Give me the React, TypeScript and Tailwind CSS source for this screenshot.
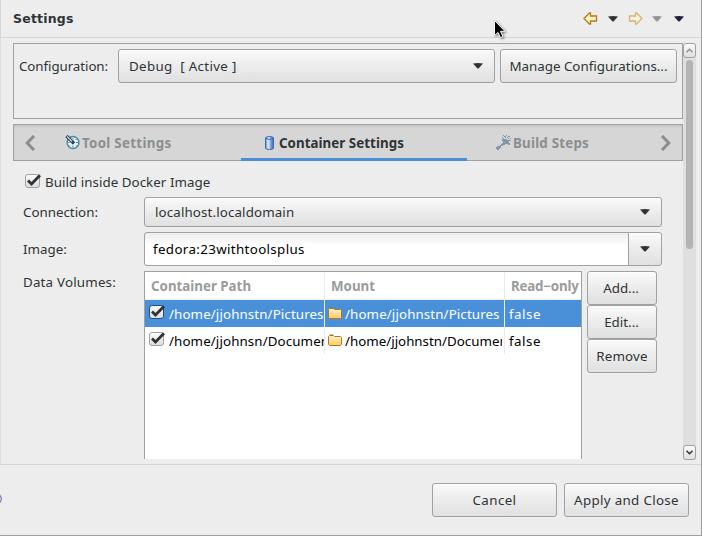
import React from "react";

const raised =
  "border border-[#a1a1a1] rounded-[3px] bg-linear-to-b from-[#fafafa] via-[#ececec] to-[#e0e0e0] shadow-[inset_0_1px_0_#ffffff]";

function Button({ className = "", children }: { className?: string; children: React.ReactNode }) {
  return (
    <button className={`${raised} flex shrink-0 items-center justify-center whitespace-pre ${className}`}>
      {children}
    </button>
  );
}

function Down({ color = "#2e3436", className = "" }: { color?: string; className?: string }) {
  return (
    <svg width="10" height="6" viewBox="0 0 10 6" className={`shrink-0 ${className}`}>
      <path d="M0 .5 Q5 -.3 10 .5 L6 5 Q5 6 4 5Z" fill={color} />
    </svg>
  );
}

function Check({ selected = false }: { selected?: boolean }) {
  return (
    <svg width="17" height="16" viewBox="0 0 17 16" className="shrink-0">
      <defs>
        <linearGradient id="checkFill" x1="0" y1="0" x2="0" y2="1">
          <stop offset="0" stopColor="#fcfcfc" />
          <stop offset="1" stopColor="#dcdcdc" />
        </linearGradient>
      </defs>
      <rect x="0.5" y="1.5" width="14" height="13" rx="2.5" fill="url(#checkFill)" stroke={selected ? "#1f4f86" : "#a1a1a1"} />
      <path d="M3 7.5 L6.5 11 L15 2.3" fill="none" stroke="#2e3436" strokeWidth="2.8" />
    </svg>
  );
}

function Folder() {
  return (
    <svg width="15" height="13" viewBox="0 0 15 13" className="shrink-0">
      <defs>
        <linearGradient id="folderFill" x1="0" y1="0" x2="0" y2="1">
          <stop offset="0" stopColor="#fff7cf" />
          <stop offset="1" stopColor="#fbc85a" />
        </linearGradient>
      </defs>
      <path d="M.5 10.5 V2.5 L1.5 1.5 H5.5 L6.5 2.5 H12.5 L13.5 3.5 V10.5 L12.5 11.5 H1.5Z" fill="url(#folderFill)" stroke="#b87528" />
      <path d="M2 1 H5" stroke="#a9651a" />
    </svg>
  );
}

function Arrow({ faded = false, flip = false, className = "" }: { faded?: boolean; flip?: boolean; className?: string }) {
  return (
    <svg width="15" height="13" viewBox="0 0 15 13" className={`shrink-0 ${flip ? "-scale-x-100" : ""} ${faded ? "opacity-50" : ""} ${className}`}>
      <path d="M1 6.5 L6.5 1 H7.5 V4 H13.5 V9 H7.5 V12 H6.5Z" fill="#fff6cc" stroke="#b87a0c" strokeWidth="1.3" />
    </svg>
  );
}

function Gauge() {
  return (
    <svg width="15" height="15" viewBox="0 0 15 15" className="shrink-0">
      <circle cx="8" cy="7.5" r="5.9" fill="#f1f6f8" stroke="#4a86ae" strokeWidth="1.5" />
      <path d="M8 3v1.5 M8 10.5v2 M3.3 7.5h1.5 M11 7.5h2 M10.5 5l1-1 M10.8 10.3l.9.9 M5.2 10.3l-.9.9" stroke="#4a86ae" />
      <path d="M1.5 1 L9 8.5" stroke="#1d3f63" strokeWidth="3.2" />
      <path d="M2 1.5 L7 6.5" stroke="#e3e6b8" strokeWidth="1.1" />
    </svg>
  );
}

function Cylinder() {
  return (
    <svg width="9" height="14" viewBox="0 0 9 14" className="shrink-0">
      <defs>
        <linearGradient id="cylinderFill">
          <stop offset="0" stopColor="#5b8bd0" />
          <stop offset=".35" stopColor="#e4efff" />
          <stop offset=".6" stopColor="#8db0e4" />
          <stop offset="1" stopColor="#3761ae" />
        </linearGradient>
      </defs>
      <path d="M.5 2 Q.5 .5 4.5 .5 T8.5 2 V12 Q8.5 13.5 4.5 13.5 T.5 12Z" fill="url(#cylinderFill)" stroke="#3f6cb4" />
      <path d="M1 2.5 Q4.5 4.5 8 2.5" fill="none" stroke="#3f6cb4" />
    </svg>
  );
}

function Wrench() {
  return (
    <svg width="16" height="15" viewBox="0 0 16 15" className="shrink-0" shapeRendering="crispEdges">
      <path d="M1 11h3v1h1v1h-1v1h-1v1h-2v-1h-1v-2h1z M4 10h1v-1h1v-1h1v-1h1v-3h1v1h1v1h1v1h2v1h1v2h-2v-1h-3v1h-2v1h-2v1h-1v1h-1z M6 4h2v1h1v3h-2v-2h-1z M9 4h2v1h2v2h-4z" fill="#8298ab" />
      <path d="M7 0h1v1h-1z M8 1h2v1h-2z M10 0h1v1h-1z M12 1h2v1h-2z M6 2h1v1h-1z M9 2h1v1h-1z M11 2h1v1h-1z M14 3h1v1h-1z M13 5h2v1h-2z M7 3h1v1h-1z M12 3h1v1h-1z" fill="#8298ab" />
    </svg>
  );
}

function Chevron({ right = false }: { right?: boolean }) {
  return (
    <svg width="11" height="16" viewBox="0 0 11 16" className={`shrink-0 ${right ? "-scale-x-100" : ""}`}>
      <path d="M9 1 L2.2 8 L9 15" fill="none" stroke="#8b8e8f" strokeWidth="3" />
    </svg>
  );
}

function Row({ path, mount, selected = false }: { path: string; mount: string; selected?: boolean }) {
  return (
    <div className={`grid h-[27px] grid-cols-[180px_180px_76px] whitespace-nowrap ${selected ? "bg-[#4a90d9] text-white" : "text-black"}`}>
      <div className="flex items-center overflow-hidden border-r border-[#ebebeb] pl-1">
        <div className="mr-[3px] pb-[3px]"><Check selected={selected} /></div>
        <span className="min-w-0 overflow-hidden pt-px tracking-[0.11px]">{path}</span>
      </div>
      <div className="flex items-center overflow-hidden border-r border-[#ebebeb] pl-[3px]">
        <div className="mr-[2px] pb-px"><Folder /></div>
        <span className={`mr-0.5 min-w-0 overflow-hidden pt-px ${selected ? "tracking-[0.11px]" : "tracking-normal"}`}>{mount}</span>
      </div>
      <div className="flex items-center pl-1 pt-px tracking-[0.5px]">false</div>
    </div>
  );
}

export default function App() {
  return (
    <div className="relative flex h-[536px] w-[702px] flex-col overflow-hidden border-r border-b border-[#a1a1a1] bg-[#ededed] font-['Noto_Sans','Open_Sans',sans-serif] text-[13.33px] leading-[18px] text-[#2e3436]">
      <header className="flex h-[38px] shrink-0 items-center border-b border-l border-[#d5d5d5] pl-3">
        <h1 className="flex-1 font-['DejaVu_Sans',sans-serif] text-[12.5px] font-bold tracking-[0.2px]">Settings</h1>
        <Arrow />
        <Down className="ml-[10px]" />
        <Arrow flip faded className="ml-[10px]" />
        <Down color="#909394" className="ml-[9px]" />
        <Down color="#261c3e" className="ml-[12px] mr-[17px]" />
      </header>

      <div className="flex h-[426px] shrink-0 border-l border-[#dedede] pl-3 pt-[5px]">
        <main className="flex w-[670px] shrink-0 flex-col">
          <section className="flex h-[76px] shrink-0 items-start border border-[#a1a1a1] pl-[5px] pt-[5px]">
            <span className="flex h-[34px] w-[99px] items-center tracking-[-0.07px]">Configuration:</span>
            <Button className="h-[34px] w-[377px]">
              <span className="flex-1 pl-[10px] text-left tracking-[0.34px]">{"Debug  [ Active ]"}</span>
              <Down className="mr-[11px]" />
            </Button>
            <Button className="ml-[5px] h-[34px] w-[177px]">Manage Configurations...</Button>
          </section>

          <nav className="mt-[5px] flex h-[37px] shrink-0 items-stretch border border-[#a1a1a1] bg-[#d6d6d6] font-bold text-[#8b8e8f] shadow-[inset_0_2px_2px_#c6c6c6]">
            <div className="flex w-[49px] items-center pl-[11px]"><Chevron /></div>
            <div className="flex w-[178px] items-center gap-[2px] pl-[2px]"><Gauge /><span className="tracking-[0.3px]">Tool Settings</span></div>
            <div className="-mb-px flex w-[226px] items-center gap-[5px] border-b-[3px] border-[#4a90d9] pl-[24px] pt-[3px] text-[#2e3436]"><Cylinder /><span className="tracking-[0.05px]">Container Settings</span></div>
            <div className="flex flex-1 items-center gap-px pl-[29px]"><Wrench /><span className="tracking-[0.22px]">Build Steps</span></div>
            <div className="flex items-center pr-[11px]"><Chevron right /></div>
          </nav>

          <div className="mt-[11px] flex h-[20px] shrink-0 items-center gap-[3px] pl-3">
            <div className="pb-[3px]"><Check /></div><span className="tracking-[0.05px]">Build inside Docker Image</span>
          </div>

          <div className="mt-[5px] flex h-[30px] shrink-0 items-center pl-[10px]">
            <span className="w-[121px]">Connection:</span>
            <Button className="h-[30px] w-[518px]">
              <span className="flex-1 pl-[10px] text-left tracking-[0.13px]">localhost.localdomain</span>
              <Down className="mr-[11px]" />
            </Button>
          </div>

          <div className="mt-[5px] flex h-[34px] shrink-0 items-center pl-[10px]">
            <span className="w-[121px]">Image:</span>
            <div className="flex h-[34px] w-[485px] items-center rounded-l-[3px] border border-[#a1a1a1] bg-linear-to-b from-[#ededed] via-white via-40% to-white pl-[8px] tracking-[0.36px] text-black">fedora:23withtoolsplus</div>
            <Button className="-ml-px h-[34px] w-[34px] rounded-l-none"><Down /></Button>
          </div>

          <div className="mt-[5px] flex h-[188px] shrink-0 pl-[10px]">
            <span className="w-[121px] pt-[2px] tracking-[0.2px]">Data Volumes:</span>
            <div className="w-[438px] border-x border-t border-[#a1a1a1] bg-white">
              <div className="grid h-[28px] grid-cols-[180px_180px_76px] whitespace-nowrap border-b border-[#ebebeb] font-bold text-[#999c9c]">
                <span className="border-r border-[#ebebeb] pl-[6px] pt-[5px]">Container Path</span>
                <span className="border-r border-[#ebebeb] pl-[6px] pt-[5px]">Mount</span>
                <span className="pl-[6px] pt-[5px] tracking-[-0.2px]">Read−only</span>
              </div>
              <Row selected path="/home/jjohnstn/Pictures" mount="/home/jjohnstn/Pictures" />
              <Row path="/home/jjohnsn/Documen" mount="/home/jjohnstn/Documen" />
            </div>
            <div className="ml-[5px] flex w-[70px] flex-col">
              <Button className="h-[34px]"><span className="-ml-0.5">Add...</span></Button>
              <Button className="h-[34px]"><span className="-ml-px">Edit...</span></Button>
              <Button className="h-[34px] tracking-[0.2px]">Remove</Button>
            </div>
          </div>
        </main>

        <div className="flex h-[417px] w-[13px] shrink-0 flex-col items-center bg-[#dfdfdf]">
          <div className={`${raised} flex h-[15px] w-[13px] shrink-0 items-center justify-center`}>
            <svg width="7" height="5" viewBox="0 0 7 5"><path d="M.5 4.3 L3.5 1.3 L6.5 4.3" fill="none" stroke="#8b8e8f" strokeWidth="1.5" /></svg>
          </div>
          <div className="mt-[2px] h-[189px] w-[7px] shrink-0 rounded-full bg-[#b2b3b4]" />
          <div className={`${raised} mt-auto flex h-[15px] w-[13px] shrink-0 items-center justify-center`}>
            <svg width="7" height="5" viewBox="0 0 7 5"><path d="M.5 .7 L3.5 3.7 L6.5 .7" fill="none" stroke="#2e3436" strokeWidth="1.5" /></svg>
          </div>
        </div>
      </div>

      <footer className="relative flex flex-1 items-start justify-end gap-[7px] border-t border-[#d5d5d5] pr-3 pt-[18px]">
        <svg width="2" height="12" viewBox="0 0 2 12" className="absolute left-0 top-[28px]">
          <circle cx="-4" cy="6" r="5.3" fill="none" stroke="#6d809e" strokeWidth="1.2" />
        </svg>
        <Button className="h-[34px] w-[125px] tracking-[0.4px]">Cancel</Button>
        <Button className="h-[34px] w-[125px] tracking-[0.33px]">Apply and Close</Button>
      </footer>

      <svg width="15" height="21" viewBox="0 0 15 21" className="absolute left-[493px] top-[19px] drop-shadow-[1px_1px_1px_#0008]">
        <path d="M1.5 1.5 V16.5 L5 13.5 L7.5 18.7 L10 17.5 L7.5 12.3 H12Z" fill="#000" stroke="#fff" />
      </svg>
    </div>
  );
}
